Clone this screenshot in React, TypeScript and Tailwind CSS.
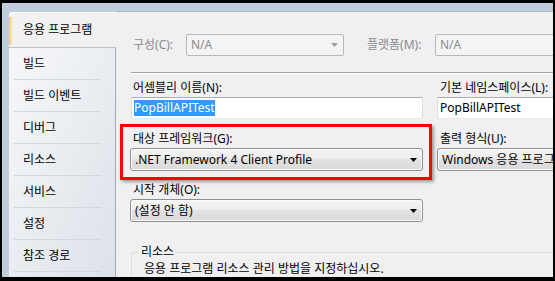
import React from "react";

function Arrow({ disabled }: { disabled?: boolean }) {
  return (
    <svg width="7" height="4" viewBox="0 0 7 4" className="absolute right-[5px] top-1/2 -translate-y-1/2">
      <path d="M0 0 H7 L3.5 4 Z" fill={disabled ? "#a0a0a0" : "#000"} />
    </svg>
  );
}

function DisabledCombo({ text, w }: { text: string; w: string }) {
  return (
    <div className={`relative h-[22px] ${w} shrink-0 rounded-[2px] border border-[#b4b9bd] bg-[#f4f4f4] pl-[4px] text-[#8b8b8b] flex items-center`}>
      <span>{text}</span>
      <Arrow disabled />
    </div>
  );
}

function Combo({ text }: { text: string }) {
  return (
    <div className="relative h-[23px] w-full rounded-[3px] border border-[#8e8f8f] bg-[linear-gradient(#f4f4f4_0%,#ececec_50%,#e2e2e2_50%,#dadada_100%)] pl-[4px] flex items-center whitespace-nowrap overflow-hidden shadow-[inset_0_0_0_1px_#fbfbfb]">
      <span>{text}</span>
      <Arrow />
    </div>
  );
}

function TextBox({ children }: { children: React.ReactNode }) {
  return (
    <div className="h-[22px] w-full border border-[#abadb3] border-l-[#dbdfe6] border-r-[#dbdfe6] border-b-[#e3e9ef] bg-white pl-[2px] flex items-center whitespace-nowrap overflow-hidden">
      {children}
    </div>
  );
}

const navItems = ["빌드", "빌드 이벤트", "디버그", "리소스", "서비스", "설정", "참조 경로"];

export default function App() {
  return (
    <div className="w-[555px] h-[281px] bg-black pt-[3px] pl-[2px] pr-[2px] pb-[4px] overflow-hidden font-['Noto_Sans','Noto_Sans_CJK_KR',sans-serif] text-[12px] leading-[16px] text-black">
      <div className="h-full bg-[#bfcddc] pt-[8px] pl-[7px] flex">
        {/* Nav */}
        <div className="w-[107px] shrink-0 mt-[1px] flex flex-col">
          <div className="relative h-[35px] rounded-tl-[3px] border-t border-l border-white bg-[#f1f1f1] flex items-center pl-[13px]">
            <div className="absolute left-[-1px] top-[4px] bottom-[2px] w-[3px] bg-[linear-gradient(to_right,#f3c877,#fbe7b6)]" />
            <span>응용 프로그램</span>
          </div>
          <div className="flex-1 border-t border-r border-t-[#bcc3cc] border-r-[#a3aab3] bg-[linear-gradient(to_bottom_right,#f6f7f9,#dde2e9)] flex flex-col">
            {navItems.map((t) => (
              <div key={t} className="h-[32px] shrink-0 flex flex-col">
                <div className="flex-1 flex items-center pl-[14px]">{t}</div>
                <div className="mx-[5px] mr-[14px] h-[1px] bg-[#d3d8de]" />
              </div>
            ))}
          </div>
        </div>
        {/* Content */}
        <div className="relative flex-1 min-w-0 overflow-hidden border-t border-[#a9b7c7] bg-[#f0f0f0] pl-[14px]">
          {/* Row 1 */}
          <div className="mt-[22px] flex items-center whitespace-nowrap">
            <span className="ml-[3px] w-[53px] shrink-0 text-[#8b8b8b]">구성(C):</span>
            <DisabledCombo text="N/A" w="w-[158px]" />
            <span className="ml-[23px] w-[68px] shrink-0 text-[#8b8b8b]">플랫폼(M):</span>
            <DisabledCombo text="N/A" w="w-[150px]" />
          </div>
          <div className="mt-[16px] ml-[1px] h-[2px] border-t border-[#a0a0a0] border-b border-b-white" />
          <div className="grid grid-cols-[293px_150px] gap-x-[14px]">
            {/* left column */}
            <div className="flex flex-col">
              <div className="mt-[6px] pl-[3px] whitespace-nowrap">어셈블리 이름(N):</div>
              <div className="mt-[1px] ml-[1px]">
                <TextBox>
                  <span className="bg-[#3399ff] text-white">PopBillAPITest</span>
                </TextBox>
              </div>
              <div className="mt-[12px] pl-[3px] whitespace-nowrap">대상 프레임워크(G):</div>
              <div className="mt-[1px]">
                <Combo text=".NET Framework 4 Client Profile" />
              </div>
              <div className="mt-[11px] pl-[3px] whitespace-nowrap">시작 개체(O):</div>
              <div className="mt-[1px]">
                <Combo text="(설정 안 함)" />
              </div>
            </div>
            {/* right column */}
            <div className="flex flex-col">
              <div className="mt-[6px] pl-[3px] whitespace-nowrap">기본 네임스페이스(L):</div>
              <div className="mt-[1px]">
                <TextBox>
                  <span>PopBillAPITest</span>
                </TextBox>
              </div>
              <div className="mt-[12px] pl-[3px] whitespace-nowrap">출력 형식(U):</div>
              <div className="mt-[1px]">
                <Combo text="Windows 응용 프로그램" />
              </div>
            </div>
          </div>
          {/* Group box */}
          <div className="relative mt-[30px] ml-[1px] w-[500px] h-[60px] rounded-[3px] border border-[#d5dfe5]">
            <span className="absolute left-[7px] top-[-9px] bg-[#f0f0f0] px-[2px]">리소스</span>
            <div className="pt-[8px] pl-[12px] whitespace-nowrap">응용 프로그램 리소스 관리 방법을 지정하십시오.</div>
          </div>
          {/* Red annotation */}
          <div className="absolute left-[4px] top-[112px] w-[312px] h-[56px] border-[3px] border-[#ff0000] shadow-[2px_2px_3px_rgba(0,0,0,0.35)] pointer-events-none" />
        </div>
      </div>
    </div>
  );
}
